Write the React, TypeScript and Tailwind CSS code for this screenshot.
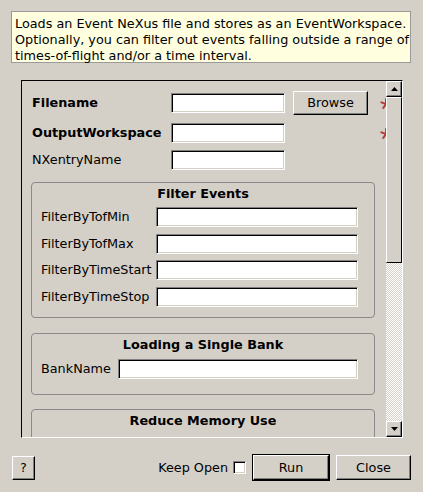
import React from "react";

const raised =
  "bg-[#d4d0c8] border border-t-white border-l-white border-b-black border-r-black shadow-[inset_-1px_-1px_0_#808080]";
const sunken =
  "bg-white border border-t-[#808080] border-l-[#808080] border-b-white border-r-white shadow-[inset_1px_1px_0_#000,inset_-1px_-1px_0_#d4d0c8]";

function Star() {
  return (
    <svg width="12" height="12" viewBox="0 0 12 12" className="shrink-0 mt-[2px]">
      <g stroke="#b83a32" strokeWidth="2" strokeLinecap="round">
        <line x1="6" y1="6" x2="6" y2="1" />
        <line x1="6" y1="6" x2="1.4" y2="4.4" />
        <line x1="6" y1="6" x2="10.6" y2="4.4" />
        <line x1="6" y1="6" x2="3.2" y2="10" />
        <line x1="6" y1="6" x2="8.8" y2="10" />
      </g>
    </svg>
  );
}

function Group({
  title,
  children,
  className = "",
}: {
  title: string;
  children?: React.ReactNode;
  className?: string;
}) {
  return (
    <div
      className={`w-[344px] border border-[#8a8a8a] rounded-[4px] pt-[3px] shrink-0 ${className}`}
    >
      <div className="text-center font-bold leading-[16px] h-[16px]">{title}</div>
      {children}
    </div>
  );
}

function FieldRow({
  label,
  labelW,
  inputW,
  className = "",
}: {
  label: string;
  labelW: string;
  inputW: string;
  className?: string;
}) {
  return (
    <div className={`flex items-center h-[20px] pl-[9px] ${className}`}>
      <div className={`${labelW} whitespace-nowrap`}>{label}</div>
      <div className={`${inputW} h-[20px] ${sunken}`} />
    </div>
  );
}

export default function App() {
  return (
    <div className="w-[423px] h-[492px] bg-[#d4d0c8] flex flex-col text-[12.8px] text-black font-['DejaVu_Sans',sans-serif] overflow-hidden">
      {/* Description */}
      <div className="ml-[11px] mt-[11px] w-[400px] h-[52px] bg-[#ffffe0] border border-[#9a9a9a] pl-[3px] pt-[4px] leading-[16px] whitespace-nowrap">
        <div>Loads an Event NeXus file and stores as an EventWorkspace.</div>
        <div>Optionally, you can filter out events falling outside a range of</div>
        <div>times-of-flight and/or a time interval.</div>
      </div>

      {/* Scroll area */}
      <div className="ml-[21px] mt-[17px] w-[382px] h-[358px] border border-t-black border-l-black border-b-white border-r-white flex">
        <div className="flex-1 overflow-hidden">
          <div className="w-[420px] pl-[9px] pt-[10px] flex flex-col">
            {/* Filename */}
            <div className="flex items-center h-[24px] pl-[1px]">
              <div className="w-[139px] font-bold">Filename</div>
              <div className={`w-[114px] h-[20px] ${sunken}`} />
              <button className={`ml-[8px] w-[75px] h-[24px] ${raised} flex items-center justify-center`}>
                Browse
              </button>
              <div className="ml-[12px]">
                <Star />
              </div>
            </div>
            {/* OutputWorkspace */}
            <div className="flex items-center h-[20px] mt-[8px] pl-[1px]">
              <div className="w-[139px] font-bold whitespace-nowrap">OutputWorkspace</div>
              <div className={`w-[114px] h-[20px] ${sunken}`} />
              <div className="ml-[95px]">
                <Star />
              </div>
            </div>
            {/* NXentryName */}
            <div className="flex items-center h-[20px] mt-[7px] pl-[1px]">
              <div className="w-[139px]">NXentryName</div>
              <div className={`w-[114px] h-[20px] ${sunken}`} />
            </div>

            <Group title="Filter Events" className="mt-[12px] pb-[10px]">
              <FieldRow label="FilterByTofMin" labelW="w-[115px]" inputW="w-[202px]" className="mt-[5px]" />
              <FieldRow label="FilterByTofMax" labelW="w-[115px]" inputW="w-[202px]" className="mt-[7px]" />
              <FieldRow label="FilterByTimeStart" labelW="w-[115px]" inputW="w-[202px]" className="mt-[6px]" />
              <FieldRow label="FilterByTimeStop" labelW="w-[115px]" inputW="w-[202px]" className="mt-[7px]" />
            </Group>

            <Group title="Loading a Single Bank" className="mt-[15px] pb-[15px]">
              <FieldRow label="BankName" labelW="w-[77px]" inputW="w-[240px]" className="mt-[6px]" />
            </Group>

            <Group title="Reduce Memory Use" className="mt-[14px] h-[80px]" />
          </div>
        </div>

        {/* Scrollbar */}
        <div className="w-[16px] flex flex-col shrink-0">
          <div className={`h-[16px] ${raised} flex items-center justify-center`}>
            <svg width="7" height="4" viewBox="0 0 7 4">
              <polygon points="3.5,0 7,4 0,4" fill="#000" />
            </svg>
          </div>
          <div className="h-[166px] bg-[#d4d0c8] border border-t-white border-l-white border-b-black border-r-black" />
          <div className="flex-1 bg-[repeating-conic-gradient(#ffffff_0_25%,#d4d0c8_0_50%)] bg-[length:2px_2px]" />
          <div className={`h-[16px] ${raised} flex items-center justify-center`}>
            <svg width="7" height="4" viewBox="0 0 7 4">
              <polygon points="0,0 7,0 3.5,4" fill="#000" />
            </svg>
          </div>
        </div>
      </div>

      {/* Bottom buttons */}
      <div className="mt-[16px] h-[27px] flex items-center">
        <button className={`ml-[12px] w-[23px] h-[24px] ${raised} flex items-center justify-center`}>
          ?
        </button>
        <div className="flex-1" />
        <span className="whitespace-nowrap">Keep Open</span>
        <div className={`ml-[5px] w-[13px] h-[13px] ${sunken}`} />
        <div className="ml-[6px] w-[78px] h-[27px] border border-black">
          <button className={`w-full h-full ${raised} flex items-center justify-center`}>Run</button>
        </div>
        <button className={`ml-[6px] mr-[12px] w-[75px] h-[25px] ${raised} flex items-center justify-center`}>
          Close
        </button>
      </div>
    </div>
  );
}
